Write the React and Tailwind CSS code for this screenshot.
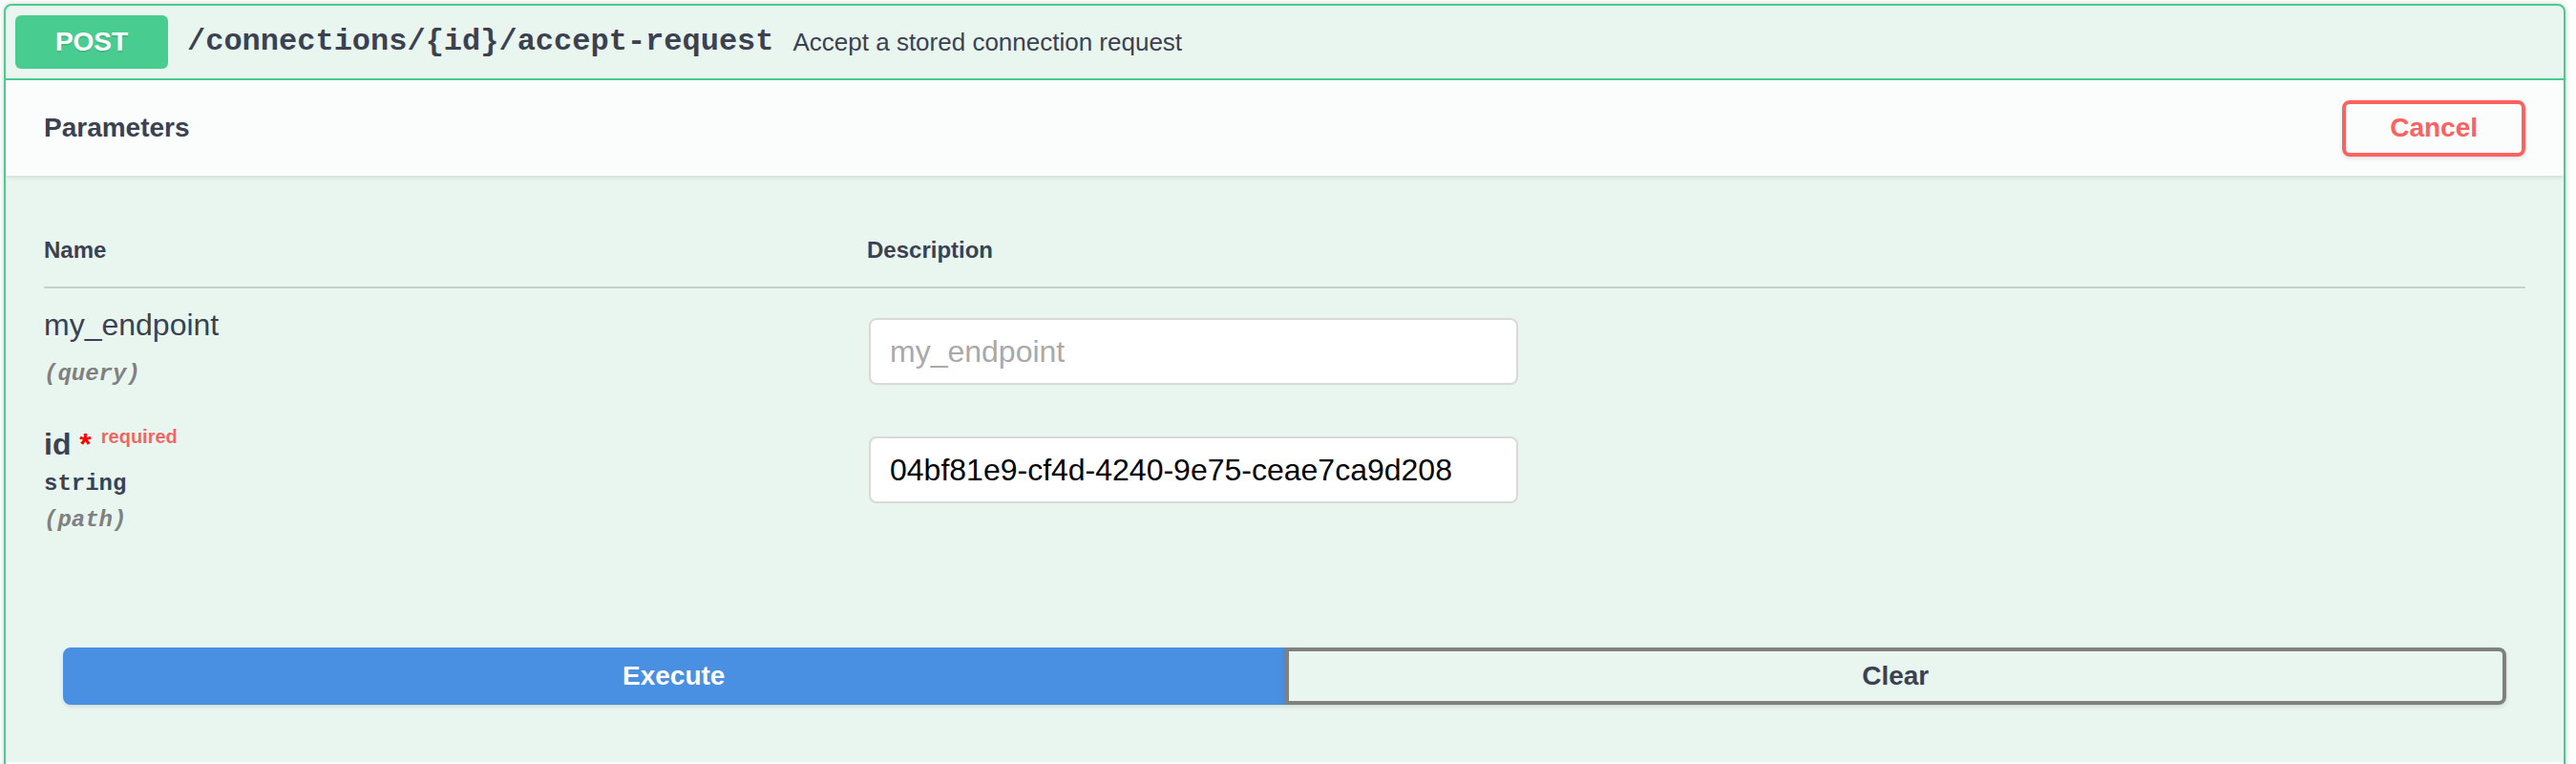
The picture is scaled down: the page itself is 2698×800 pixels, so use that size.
import React from "react";

const sans = "font-['Liberation_Sans',Arial,sans-serif]";
const mono = "font-['Liberation_Mono','Courier_New',monospace]";

export default function App() {
  return (
    <div className={`min-h-[800px] w-[2698px] bg-white pt-[4px] pl-[4px] ${sans} text-[#3b4151]`}>
      <div className="w-[2683px] overflow-hidden rounded-[8px] border-2 border-[#49cc90] bg-[#e8f6ef] shadow-[0_0_6px_rgba(0,0,0,0.19)]">
        {/* summary */}
        <div className="flex items-center border-b-2 border-[#49cc90] p-[10px]">
          <div className="flex h-[56px] min-w-[160px] items-center justify-center rounded-[6px] bg-[#49cc90] px-[30px] text-[28px] font-bold text-white [text-shadow:0_2px_0_rgba(0,0,0,0.1)]">
            POST
          </div>
          <div className={`px-[20px] text-[32px] font-bold ${mono} text-[#3b4151]`}>
            /connections/{"{id}"}/accept-request
          </div>
          <div className="flex-1 text-[26px] text-[#3b4151]">Accept a stored connection request</div>
        </div>

        {/* section header */}
        <div className="flex h-[100px] items-center bg-white/80 px-[40px] shadow-[0_2px_4px_rgba(0,0,0,0.1)]">
          <h4 className="flex-1 text-[28px] font-bold">Parameters</h4>
          <button className="h-[59px] rounded-[8px] border-4 border-[#ff6060] bg-transparent px-[46px] text-[28px] font-bold text-[#ff6060] shadow-[0_2px_4px_rgba(0,0,0,0.1)]">
            Cancel
          </button>
        </div>

        {/* parameters table */}
        <div className="px-[40px] pt-[40px]">
          <div className="flex h-[78px] items-center border-b-2 border-[rgba(59,65,81,0.2)] text-[24px] font-bold">
            <div className="w-[862px]">Name</div>
            <div>Description</div>
          </div>

          <div className="flex h-[125px]">
            <div className="w-[862px] pt-[20px]">
              <div className="h-[36px] text-[32px] leading-[36px]">my_endpoint</div>
              <div className="h-[20px]" />
              <div className={`text-[24px] leading-[28px] font-semibold italic text-[#808080] ${mono}`}>(query)</div>
            </div>
            <div className="pt-[31px]">
              <input
                type="text"
                placeholder="my_endpoint"
                className="ml-[2px] h-[70px] w-[680px] rounded-[8px] border-2 border-[#d9d9d9] bg-white px-[20px] text-[32px] text-black outline-none placeholder:text-[#a9a9a9]"
              />
            </div>
          </div>

          <div className="flex h-[152px]">
            <div className="w-[862px] pt-[20px]">
              <div className="h-[36px] text-[32px] leading-[36px] font-bold">
                id<span className="text-[#ff0000]">&nbsp;*</span>
                <span className="relative top-[-12px] pl-[10px] text-[20px] font-bold text-[rgba(255,0,0,0.6)]">required</span>
              </div>
              <div className={`py-[10px] text-[24px] leading-[28px] font-bold ${mono}`}>string</div>
              <div className={`text-[24px] leading-[28px] font-semibold italic text-[#808080] ${mono}`}>(path)</div>
            </div>
            <div className="pt-[30px]">
              <input
                type="text"
                defaultValue="04bf81e9-cf4d-4240-9e75-ceae7ca9d208"
                className="ml-[2px] h-[70px] w-[680px] rounded-[8px] border-2 border-[#d9d9d9] bg-white px-[20px] text-[32px] text-black outline-none"
              />
            </div>
          </div>
        </div>

        {/* execute */}
        <div className="flex px-[60px] pt-[99px] pb-[60px]">
          <button className="h-[60px] flex-1 rounded-l-[8px] border-4 border-[#4990e2] bg-[#4990e2] text-[28px] font-bold text-white shadow-[0_2px_4px_rgba(0,0,0,0.1)]">
            Execute
          </button>
          <button className="h-[60px] flex-1 rounded-r-[8px] border-4 border-[#808080] bg-transparent text-[28px] font-bold text-[#3b4151] shadow-[0_2px_4px_rgba(0,0,0,0.1)]">
            Clear
          </button>
        </div>
        <div className="h-[40px] bg-white/80" />
      </div>
    </div>
  );
}
